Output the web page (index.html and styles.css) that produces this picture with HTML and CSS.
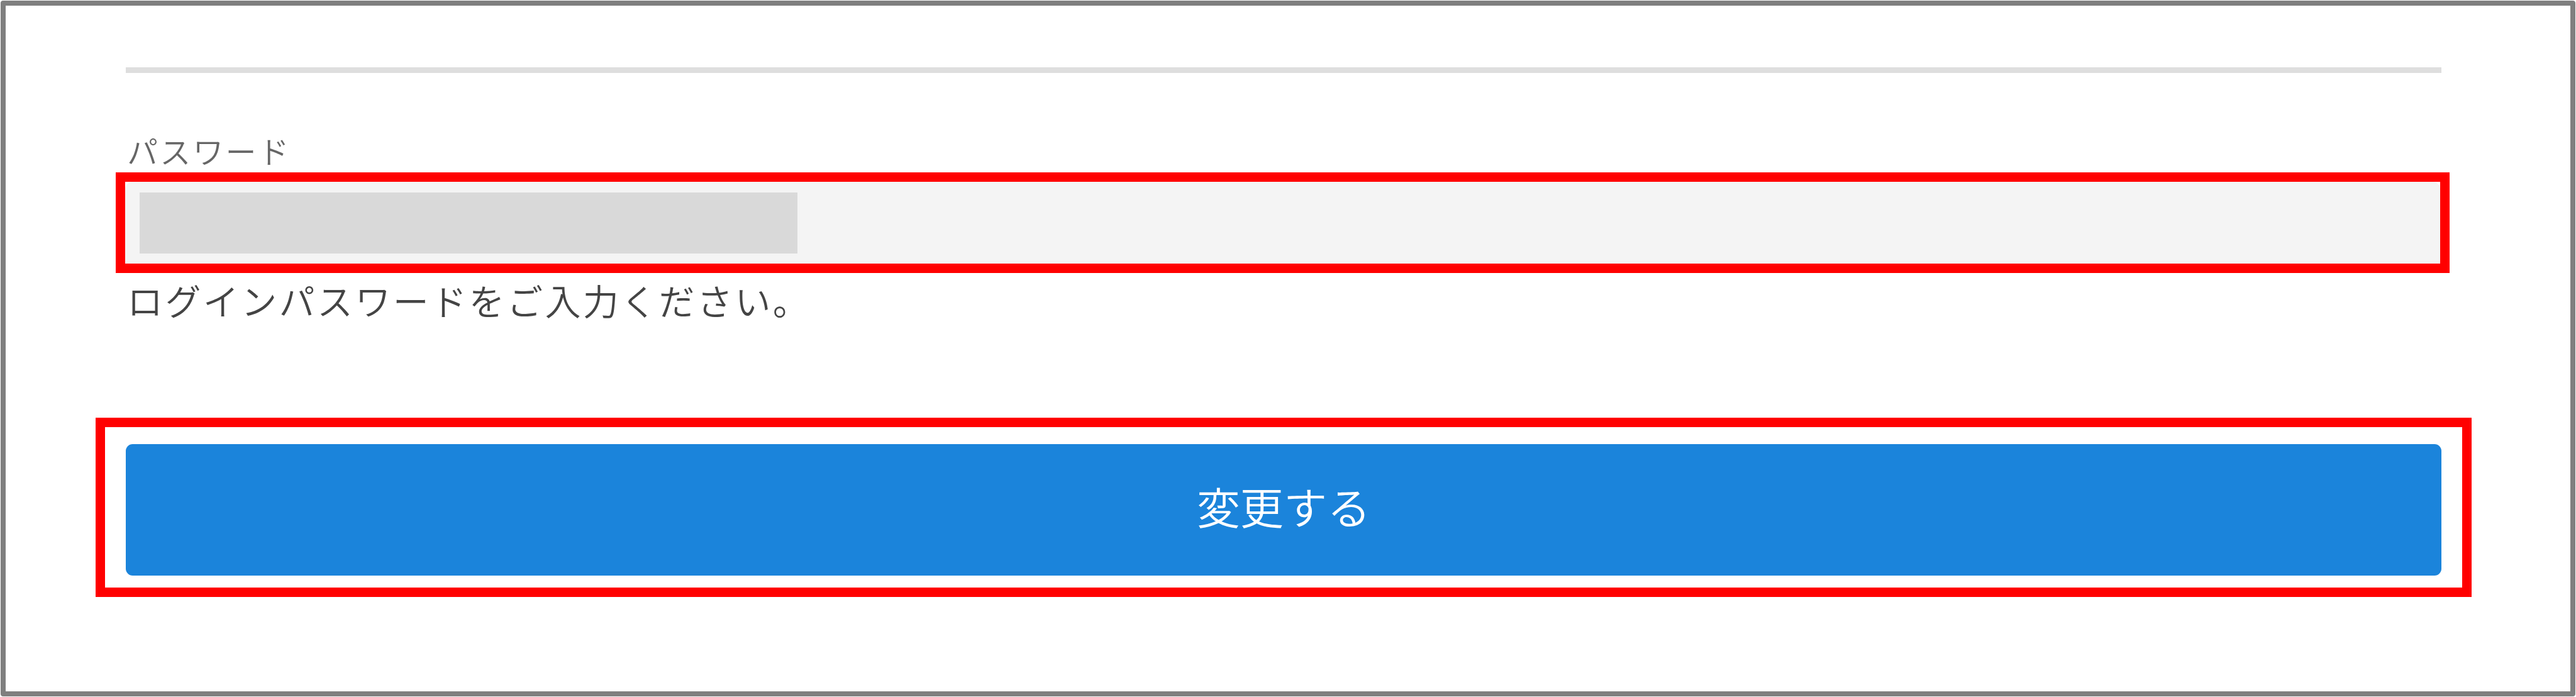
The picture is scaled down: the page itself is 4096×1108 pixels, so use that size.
FILE: index.html
```html
<!DOCTYPE html>
<html lang="ja">
<head>
  <meta charset="UTF-8" />
  <meta name="viewport" content="width=device-width, initial-scale=1.0" />
  <title>パスワード</title>
  <link rel="stylesheet" href="styles.css">
</head>
<body>
  <div class="card">
    <hr class="divider">

    <div class="label">パスワード</div>
    <div class="frame field-frame">
      <div class="field">
        <div class="mask"></div>
      </div>
    </div>
    <div class="help">ログインパスワードをご入力ください。</div>

    <div class="frame button-frame">
      <button class="submit" type="button">変更する</button>
    </div>
  </div>
</body>
</html>
```
FILE: styles.css
```css
* {
  box-sizing: border-box;
  margin: 0;
  padding: 0;
  font-family: 'Noto Sans CJK JP', sans-serif;
}

body {
  background: #fff;
  padding: 1px;
  height: 1108px;
}

.card {
  background: #fff;
  border: 8px solid #7f7f7f;
  border-radius: 4px;
  height: 1106px;
  padding: 98px 205px 0 191px;
}

.divider {
  border: none;
  height: 9px;
  background: #dedede;
}

.label {
  height: 158px;
  padding-top: 97px;
  padding-left: 2px;
  font-size: 49px;
  font-weight: 350;
  letter-spacing: 3.2px;
  line-height: 52px;
  color: #666;
}

/* red highlight frames */
.frame {
  border: 15px solid #f00;
}

.field-frame {
  height: 160px;
  margin: 0 -13px 0 -16px;
}

.field {
  height: 130px;
  padding: 17px 23px;
  background: #f4f4f4;
  border-radius: 12px 12px 0 0;
}

.mask {
  width: 1046px;
  height: 97px;
  background: #d9d9d9;
}

.help {
  height: 230px;
  padding-top: 12px;
  padding-left: 2px;
  font-size: 57px;
  font-weight: 350;
  letter-spacing: 3.4px;
  line-height: 60px;
  color: #444;
}

.button-frame {
  height: 285px;
  margin: 0 -48px;
  padding: 27px 33px 0;
}

.submit {
  display: block;
  width: 100%;
  height: 209px;
  padding-bottom: 13px;
  border: none;
  border-radius: 11px;
  background: #1b84db;
  color: #fff;
  font-size: 69.2px;
  font-weight: 350;
  line-height: 70px;
}
```
